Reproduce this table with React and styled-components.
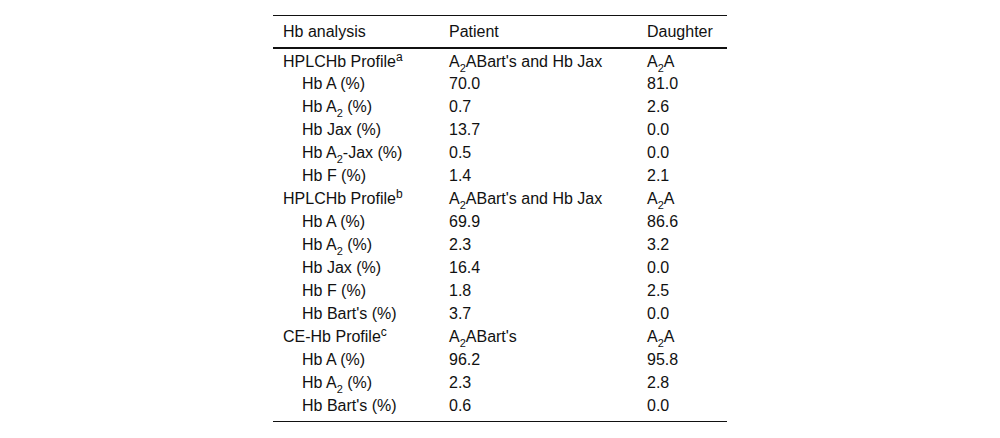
import React from 'react'
import styled, { createGlobalStyle } from 'styled-components'

const GlobalStyle = createGlobalStyle`
  body {
    margin: 0;
    background: #fff;
    font-family: "Liberation Sans", Arial, sans-serif;
    color: #111;
  }
`

const rows = [
  { label: 'HPLCHb Profile', note: 'a', patient: <><A2 />ABart's and Hb Jax</>, daughter: <><A2 />A</> },
  { label: 'Hb A (%)', sub: true, patient: '70.0', daughter: '81.0' },
  { label: <>Hb <A2 /> (%)</>, sub: true, patient: '0.7', daughter: '2.6' },
  { label: 'Hb Jax (%)', sub: true, patient: '13.7', daughter: '0.0' },
  { label: <>Hb <A2 />-Jax (%)</>, sub: true, patient: '0.5', daughter: '0.0' },
  { label: 'Hb F (%)', sub: true, patient: '1.4', daughter: '2.1' },
  { label: 'HPLCHb Profile', note: 'b', patient: <><A2 />ABart's and Hb Jax</>, daughter: <><A2 />A</> },
  { label: 'Hb A (%)', sub: true, patient: '69.9', daughter: '86.6' },
  { label: <>Hb <A2 /> (%)</>, sub: true, patient: '2.3', daughter: '3.2' },
  { label: 'Hb Jax (%)', sub: true, patient: '16.4', daughter: '0.0' },
  { label: 'Hb F (%)', sub: true, patient: '1.8', daughter: '2.5' },
  { label: "Hb Bart's (%)", sub: true, patient: '3.7', daughter: '0.0' },
  { label: 'CE-Hb Profile', note: 'c', patient: <><A2 />ABart's</>, daughter: <><A2 />A</> },
  { label: 'Hb A (%)', sub: true, patient: '96.2', daughter: '95.8' },
  { label: <>Hb <A2 /> (%)</>, sub: true, patient: '2.3', daughter: '2.8' },
  { label: "Hb Bart's (%)", sub: true, patient: '0.6', daughter: '0.0' },
]

function A2 () {
  return <>A<Sub>2</Sub></>
}

export default function App () {
  return (
    <Page>
      <GlobalStyle />
      <Table>
        <colgroup>
          <col style={{ width: 166 }} />
          <col style={{ width: 198 }} />
          <col style={{ width: 90 }} />
        </colgroup>
        <thead>
          <tr>
            <Th>Hb analysis</Th>
            <Th>Patient</Th>
            <Th>Daughter</Th>
          </tr>
        </thead>
        <tbody>
          {rows.map((row, i) =>
            <Row key={i} last={i === rows.length - 1}>
              <Label sub={row.sub}>
                {row.label}{row.note && <Sup>{row.note}</Sup>}
              </Label>
              <Cell>{row.patient}</Cell>
              <Cell>{row.daughter}</Cell>
            </Row>
          )}
        </tbody>
      </Table>
    </Page>
  )
}

const Page = styled.div`
  display: flex;
  justify-content: center;
  padding-top: 15px;
`

const Table = styled.table`
  width: 454px;
  border-collapse: collapse;
  table-layout: fixed;
  font-size: 16px;
  border-top: 1px solid #111;
  border-bottom: 1px solid #111;
`

const Th = styled.th`
  text-align: left;
  font-weight: normal;
  height: 30px;
  padding: 1px 0 0 10px;
  border-bottom: 2px solid #111;
  line-height: 18px;
`

const Row = styled.tr`
  height: ${({ last }) => last ? 28 : 23}px;
  vertical-align: top;
`

const Cell = styled.td`
  padding: 4px 0 0 10px;
  line-height: 18px;
  white-space: nowrap;
`

const Label = styled(Cell)`
  padding-left: ${({ sub }) => sub ? 29 : 10}px;
`

const Sub = styled.sub`
  font-size: 11px;
  line-height: 0;
  vertical-align: -5px;
`

const Sup = styled.sup`
  font-size: 12px;
  line-height: 0;
  vertical-align: 6px;
`
